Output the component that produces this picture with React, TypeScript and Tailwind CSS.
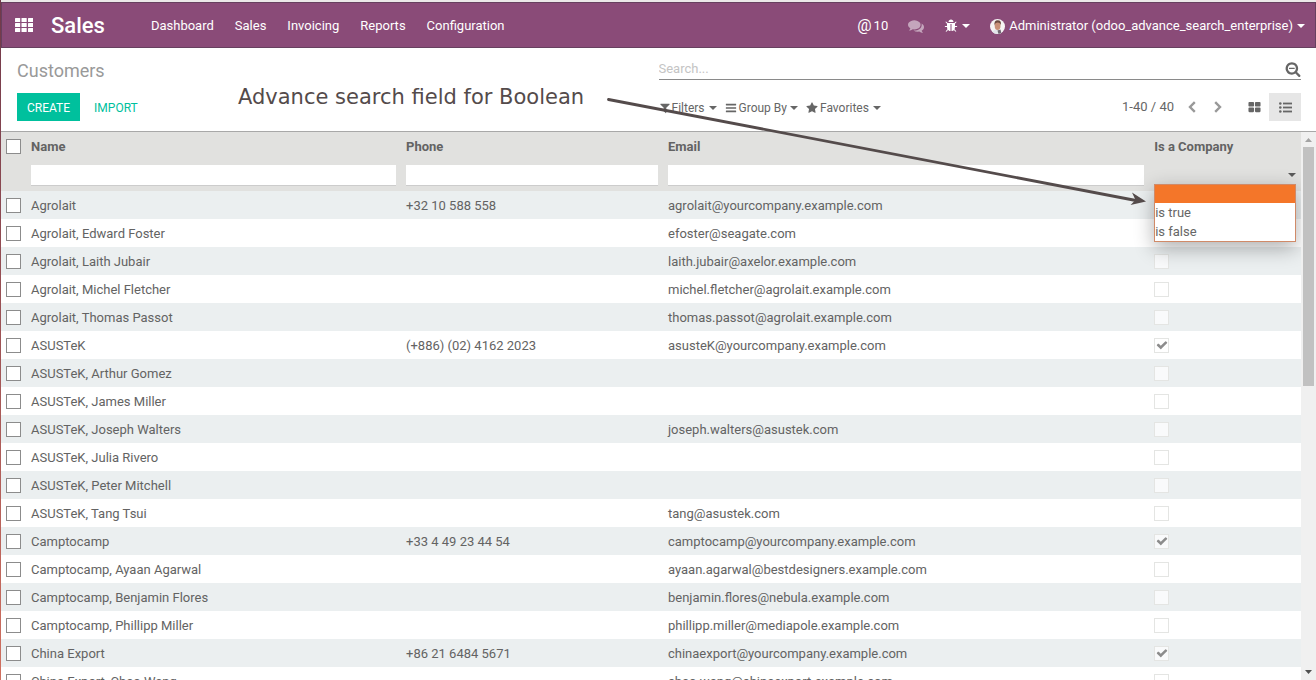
import React from "react";

type Customer = { name: string; phone?: string; email?: string; company?: boolean };

const customers: Customer[] = [
  { name: "Agrolait", phone: "+32 10 588 558", email: "agrolait@yourcompany.example.com", company: true },
  { name: "Agrolait, Edward Foster", email: "efoster@seagate.com" },
  { name: "Agrolait, Laith Jubair", email: "laith.jubair@axelor.example.com" },
  { name: "Agrolait, Michel Fletcher", email: "michel.fletcher@agrolait.example.com" },
  { name: "Agrolait, Thomas Passot", email: "thomas.passot@agrolait.example.com" },
  { name: "ASUSTeK", phone: "(+886) (02) 4162 2023", email: "asusteK@yourcompany.example.com", company: true },
  { name: "ASUSTeK, Arthur Gomez" },
  { name: "ASUSTeK, James Miller" },
  { name: "ASUSTeK, Joseph Walters", email: "joseph.walters@asustek.com" },
  { name: "ASUSTeK, Julia Rivero" },
  { name: "ASUSTeK, Peter Mitchell" },
  { name: "ASUSTeK, Tang Tsui", email: "tang@asustek.com" },
  { name: "Camptocamp", phone: "+33 4 49 23 44 54", email: "camptocamp@yourcompany.example.com", company: true },
  { name: "Camptocamp, Ayaan Agarwal", email: "ayaan.agarwal@bestdesigners.example.com" },
  { name: "Camptocamp, Benjamin Flores", email: "benjamin.flores@nebula.example.com" },
  { name: "Camptocamp, Phillipp Miller", email: "phillipp.miller@mediapole.example.com" },
  { name: "China Export", phone: "+86 21 6484 5671", email: "chinaexport@yourcompany.example.com", company: true },
  { name: "China Export, Chao Wang", email: "chao.wang@chinaexport.example.com" },
];

const paths = {
  check:
    "M1671 566q0 40-28 68l-724 724-136 136q-28 28-68 28t-68-28l-136-136-362-362q-28-28-28-68t28-68l136-136q28-28 68-28t68 28l294 295 656-657q28-28 68-28t68 28l136 136q28 28 28 68z",
  thLarge:
    "M832 1024v384q0 52-38 90t-90 38h-512q-52 0-90-38t-38-90v-384q0-52 38-90t90-38h512q52 0 90 38t38 90zm0-768v384q0 52-38 90t-90 38h-512q-52 0-90-38t-38-90v-384q0-52 38-90t90-38h512q52 0 90 38t38 90zm896 768v384q0 52-38 90t-90 38h-512q-52 0-90-38t-38-90v-384q0-52 38-90t90-38h512q52 0 90 38t38 90zm0-768v384q0 52-38 90t-90 38h-512q-52 0-90-38t-38-90v-384q0-52 38-90t90-38h512q52 0 90 38t38 90z",
  filter:
    "M1595 295q17 41-14 70l-493 493v742q0 42-39 59-13 5-25 5-27 0-45-19l-256-256q-19-19-19-45v-486l-493-493q-31-29-14-70 17-39 59-39h1280q42 0 59 39z",
  star:
    "M1728 647q0 22-26 48l-363 354 86 500q1 7 1 20 0 21-10.5 35.5t-30.5 14.5q-19 0-40-12l-449-236-449 236q-22 12-40 12-21 0-31.5-14.5t-10.5-35.5q0-6 2-20l86-500-364-354q-25-27-25-48 0-37 56-46l502-73 225-455q19-41 49-41t49 41l225 455 502 73q56 9 56 46z",
  comments:
    "M1408 768q0 139-94 257t-256.5 186.5-353.5 68.5q-86 0-176-16-124 88-278 128-36 9-86 16h-3q-11 0-20.5-8t-11.5-21q-1-3-1-6.5t.5-6.5 2-6l2.5-5 3.5-5.5 4-5 4.5-5 4-4.5q5-6 23-25t26-29.5 22.5-29 25-38.5 20.5-44q-124-72-195-177t-71-224q0-139 94-257t256.5-186.5 353.5-68.5 353.5 68.5 256.5 186.5 94 257zm384 256q0 120-71 224.5t-195 176.5q10 24 20.5 44t25 38.5 22.5 29 26 29.5 23 25q1 1 4 4.5t4.5 5 4 5 3.5 5.5l2.5 5 2 6 .5 6.5-1 6.5q-3 14-13 22t-22 7q-50-7-86-16-154-40-278-128-90 16-176 16-271 0-472-132 58 4 88 4 161 0 309-45t264-129q125-92 192-212t67-254q0-77-23-152 129 71 204 178t75 230z",
  bug:
    "M1696 960q0 26-19 45t-45 19h-224q0 171-67 290l208 209q19 19 19 45t-19 45q-18 19-45 19t-45-19l-198-197q-5 5-15 13t-42 28.5-65 36.5-82 29-97 13v-896h-128v896q-51 0-101.5-13.5t-87-33-66-39-43.500-32.500l-15-14-183 207q-20 21-48 21-24 0-43-16-19-18-20.500-44.500t15.500-46.500l202-227q-58-114-58-274h-224q-26 0-45-19t-19-45 19-45 45-19h224v-294l-173-173q-19-19-19-45t19-45 45-19 45 19l173 173h844l173-173q19-19 45-19t45 19 19 45-19 45l-173 173v294h224q26 0 45 19t19 45zm-480-576h-640q0-133 93.500-226.500t226.500-93.500 226.500 93.500 93.500 226.500z",
  searchMinus:
    "M1088 800v64q0 13-9.5 22.5t-22.5 9.5h-576q-13 0-22.5-9.5t-9.5-22.5v-64q0-13 9.5-22.5t22.5-9.5h576q13 0 22.5 9.5t9.5 22.5zm128 32q0-185-131.5-316.5t-316.5-131.5-316.5 131.5-131.5 316.5 131.5 316.5 316.5 131.5 316.5-131.5 131.5-316.5zm512 832q0 53-37.5 90.5t-90.5 37.5q-54 0-90-38l-343-342q-179 124-399 124-143 0-273.5-55.5t-225-150-150-225-55.5-273.5 55.5-273.5 150-225 225-150 273.5-55.5 273.5 55.5 225 150 150 225 55.5 273.5q0 220-124 399l343 343q37 37 37 90z",
  bars:
    "M1664 1344v128q0 26-19 45t-45 19h-1408q-26 0-45-19t-19-45v-128q0-26 19-45t45-19h1408q26 0 45 19t19 45zm0-512v128q0 26-19 45t-45 19h-1408q-26 0-45-19t-19-45v-128q0-26 19-45t45-19h1408q26 0 45 19t19 45zm0-512v128q0 26-19 45t-45 19h-1408q-26 0-45-19t-19-45v-128q0-26 19-45t45-19h1408q26 0 45 19t19 45z",
};

function Icon({ name, className }: { name: keyof typeof paths; className: string }) {
  return (
    <svg viewBox="0 0 1792 1792" className={`shrink-0 ${className}`} fill="currentColor" aria-hidden="true">
      <path d={paths[name]} />
    </svg>
  );
}

function Caret() {
  return (
    <svg viewBox="0 0 8 4" className="h-1 w-2 shrink-0" fill="currentColor" aria-hidden="true">
      <path d="M0 0h8L4 4z" />
    </svg>
  );
}

function Chevron({ left }: { left?: boolean }) {
  return (
    <svg viewBox="0 0 8 12" className="h-3 w-2" fill="none" stroke="#999" strokeWidth="2.4" aria-hidden="true">
      <path d={left ? "M6.8 1.2 2 6l4.8 4.8" : "M1.2 1.2 6 6l-4.8 4.8"} />
    </svg>
  );
}

function Avatar() {
  return (
    <svg viewBox="0 0 15 15" className="size-[15px] shrink-0" aria-hidden="true">
      <clipPath id="avatar-clip">
        <circle cx="7.5" cy="7.5" r="7.5" />
      </clipPath>
      <g clipPath="url(#avatar-clip)">
        <rect width="15" height="15" fill="#f6f4f4" />
        <path d="M2 15c0-3 2-4.200 5-4.400 3 .2 5 1.800 5 4.400z" fill="#e2e4ea" />
        <path d="M7.500 11.500l3-1 1 4.500H8.500z" fill="#6f6570" />
        <ellipse cx="7.600" cy="6.800" rx="2.900" ry="4.300" fill="#c99078" />
        <path d="M4.500 6.500C4 3 5.200 1.200 7.800 1.200c2.600 0 3.700 1.800 3 5-.4-1.800-1.200-2.700-3-2.700-1.900 0-2.900 1-3.300 3z" fill="#6b4a40" />
      </g>
    </svg>
  );
}

const boxClass = "block size-[15px] appearance-none border border-[#8c8c8c] bg-white";

function Header() {
  return (
    <header className="flex h-[46px] shrink-0 items-center border border-[#67405f] bg-[#8a4b78] pr-[10px] pl-3 text-[13px] text-white">
      <button type="button" aria-label="Applications" className="mr-[17px] p-px">
        <svg viewBox="0 0 18 14" className="h-[14px] w-[18px]" fill="currentColor" aria-hidden="true">
          {[0, 5, 10].map((y) =>
            [0, 6.5, 13].map((x) => <rect key={`${x}-${y}`} x={x} y={y} width="5.200" height="4" rx="0.600" />)
          )}
        </svg>
      </button>
      <a href="#home" className="mr-[46px] text-[22px] font-medium">Sales</a>
      <nav className="flex gap-[21px] pt-[2px]">
        <a href="#dashboard">Dashboard</a>
        <a href="#sales">Sales</a>
        <a href="#invoicing">Invoicing</a>
        <a href="#reports">Reports</a>
        <a href="#configuration">Configuration</a>
      </nav>
      <div className="ml-auto flex items-center pt-[2px]">
        <button type="button" className="mr-5 flex items-center gap-[2px]">
          <span className="text-[16px] leading-5">@</span>10
        </button>
        <button type="button" aria-label="Conversations" className="mr-5">
          <Icon name="comments" className="size-4 opacity-50" />
        </button>
        <button type="button" aria-label="Debug" className="mr-5 flex items-center gap-1">
          <Icon name="bug" className="size-[14px]" />
          <Caret />
        </button>
        <button type="button" className="flex items-center gap-1">
          <Avatar />
          <span>Administrator (odoo_advance_search_enterprise)</span>
          <Caret />
        </button>
      </div>
    </header>
  );
}

function ControlPanel() {
  return (
    <section className="grid h-[84px] shrink-0 grid-cols-2 border-b border-[#a8a8a8] bg-white text-[13px] text-[#666]">
      <div className="flex flex-col items-start pt-[11px] pl-4">
        <h1 className="text-[18px] leading-6 text-[#999]">Customers</h1>
        <div className="mt-[10px] flex text-[12px]">
          <button type="button" className="h-7 bg-[#00c09d] px-[10px] pt-px text-white">CREATE</button>
          <button type="button" className="h-7 px-[14px] pt-px text-[#00c09d]">IMPORT</button>
        </div>
      </div>
      <div className="pr-[15px]">
        <div className="flex h-8 items-center border-b border-[#8a8a8a] pt-[10px]">
          <input
            type="text"
            aria-label="Search"
            placeholder="Search..."
            className="min-w-0 flex-1 bg-transparent outline-none placeholder:text-[#c4c4c4]"
          />
          <button type="button" aria-label="Advanced search">
            <Icon name="searchMinus" className="size-4" />
          </button>
        </div>
        <div className="mt-[13px] flex h-7 items-center">
          <div className="flex gap-2 pt-[2px] text-[12px]">
            <button type="button" className="flex items-center gap-1">
              <span className="flex items-center gap-px"><Icon name="filter" className="size-3" />Filters</span>
              <Caret />
            </button>
            <button type="button" className="flex items-center gap-[3px]">
              <span className="flex items-center gap-[2px]"><Icon name="bars" className="size-3" />Group By</span>
              <Caret />
            </button>
            <button type="button" className="flex items-center gap-1">
              <span className="flex items-center gap-[2px]"><Icon name="star" className="size-3" />Favorites</span>
              <Caret />
            </button>
          </div>
          <div className="ml-auto flex items-center">
            <span className="mr-[14px]">1-40 / 40</span>
            <button type="button" aria-label="Previous" className="mr-[18px]"><Chevron left /></button>
            <button type="button" aria-label="Next" className="mr-[18px]"><Chevron /></button>
            <button type="button" aria-label="Kanban view" className="px-2"><Icon name="thLarge" className="size-[13px]" /></button>
            <button type="button" aria-label="List view" className="flex h-7 w-8 items-center justify-center bg-[#e6e6e6]">
              <svg viewBox="0 0 13 11" className="h-[11px] w-[13px]" fill="currentColor" aria-hidden="true">
                {[1.5, 5.5, 9.5].map((y) => (
                  <g key={y}>
                    <circle cx="1.300" cy={y} r="1.300" />
                    <rect x="4" y={y - 0.9} width="9" height="1.800" />
                  </g>
                ))}
              </svg>
            </button>
          </div>
        </div>
      </div>
    </section>
  );
}

function BooleanFilter() {
  return (
    <div className="relative h-[21px]">
      <select aria-label="Is a Company filter" className="block size-full appearance-none bg-transparent" defaultValue="">
        <option value=""></option>
        <option value="true">is true</option>
        <option value="false">is false</option>
      </select>
      <span className="pointer-events-none absolute top-2 right-0 text-[#5a5a5a]"><Caret /></span>
      <ul
        role="listbox"
        aria-label="Is a Company options"
        className="absolute top-[19px] left-0 z-10 w-full border border-[#d08a68] bg-white text-[13px] leading-[19px] font-normal text-[#666] shadow-[0_6px_20px_rgba(0,0,0,0.32)]"
      >
        <li role="option" aria-selected="true" className="h-[18px] bg-[#f47629]"></li>
        <li role="option" aria-selected="false">is true</li>
        <li role="option" aria-selected="false">is false</li>
      </ul>
    </div>
  );
}

function CustomerTable() {
  const filterClass = "block h-[21px] w-full border-b border-[#ccc] bg-white outline-none";
  return (
    <table className="w-full table-fixed border-collapse text-left text-[13px] leading-5 text-[#636363]">
      <colgroup>
        <col className="w-[25px]" />
        <col className="w-[28.85%]" />
        <col className="w-[20.15%]" />
        <col className="w-[37.4%]" />
        <col />
      </colgroup>
      <thead className="bg-[#e1e1df]">
        <tr className="h-[30px]">
          <th className="pb-[2px] pl-[5px]"><input type="checkbox" aria-label="Select all" className={boxClass} /></th>
          <th className="px-[5px]">Name</th>
          <th className="px-[5px]">Phone</th>
          <th className="px-[5px]">Email</th>
          <th className="px-[5px]">Is a Company</th>
        </tr>
        <tr className="h-[29px]">
          <td></td>
          <td className="px-[5px] pt-[3px] align-top"><input type="text" aria-label="Filter by name" className={filterClass} /></td>
          <td className="px-[5px] pt-[3px] align-top"><input type="text" aria-label="Filter by phone" className={filterClass} /></td>
          <td className="px-[5px] pt-[3px] align-top"><input type="text" aria-label="Filter by email" className={filterClass} /></td>
          <td className="px-[5px] pt-[3px] align-top"><BooleanFilter /></td>
        </tr>
      </thead>
      <tbody>
        {customers.map((c) => (
          <tr key={c.name} className="h-7 odd:bg-[#ebeff0] even:bg-white">
            <td className="pl-[5px]"><input type="checkbox" aria-label={`Select ${c.name}`} className={boxClass} /></td>
            <td className="px-[5px] pt-[2px]">{c.name}</td>
            <td className="px-[5px] pt-[2px]">{c.phone}</td>
            <td className="px-[5px] pt-[2px]">{c.email}</td>
            <td className="px-[5px]">
              <span className="grid size-[15px] place-items-center">
                <input
                  type="checkbox"
                  disabled
                  defaultChecked={c.company}
                  aria-label={`${c.name} is a company`}
                  className="col-start-1 row-start-1 block size-[15px] appearance-none border border-[#e4e5e3] bg-white/70"
                />
                {c.company && <Icon name="check" className="col-start-1 row-start-1 size-3 text-[#8c8c8c]" />}
              </span>
            </td>
          </tr>
        ))}
      </tbody>
    </table>
  );
}

function ScrollBar() {
  return (
    <div className="flex w-[15px] shrink-0 flex-col items-center bg-[#f0f0f0]" aria-hidden="true">
      <svg viewBox="0 0 15 15" className="size-[15px] shrink-0" fill="#a3a3a3"><path d="M4 10h7L7.500 6z" /></svg>
      <div className="min-h-0 w-[11px] flex-[239] bg-[#c1c1c1]" />
      <div className="min-h-0 flex-[279]" />
      <svg viewBox="0 0 15 15" className="size-[15px] shrink-0" fill="#505050"><path d="M4 5h7L7.500 9z" /></svg>
    </div>
  );
}

function Annotation() {
  return (
    <div className="pointer-events-none absolute inset-0 z-20 overflow-hidden text-[#544b4b]">
      <p className="absolute top-[83px] left-[238px] font-['DejaVu_Sans',sans-serif] text-[21px] leading-7 whitespace-nowrap">
        Advance search field for Boolean
      </p>
      <svg viewBox="0 0 540 108" className="absolute top-[98px] left-[607px] h-[108px] w-[540px]" aria-hidden="true">
        <path d="M1.500 1.500 529 102.500" stroke="currentColor" strokeWidth="2.800" strokeLinecap="round" />
        <path d="M539 103.500 523.500 107 528.500 102 525 94.500z" fill="currentColor" />
      </svg>
    </div>
  );
}

export default function App() {
  return (
    <div className="relative flex h-screen overflow-hidden bg-white font-['Roboto',sans-serif]">
      <div className="w-px shrink-0 bg-linear-to-b from-[#70394a] to-[#d0705f]" />
      <div className="flex min-w-0 flex-1 flex-col">
        <div className="h-[2px] shrink-0 bg-[#ebe8e8]" />
        <Header />
        <ControlPanel />
        <main className="flex min-h-0 flex-1">
          <div className="min-w-0 flex-1 overflow-hidden"><CustomerTable /></div>
          <ScrollBar />
        </main>
      </div>
      <Annotation />
    </div>
  );
}
